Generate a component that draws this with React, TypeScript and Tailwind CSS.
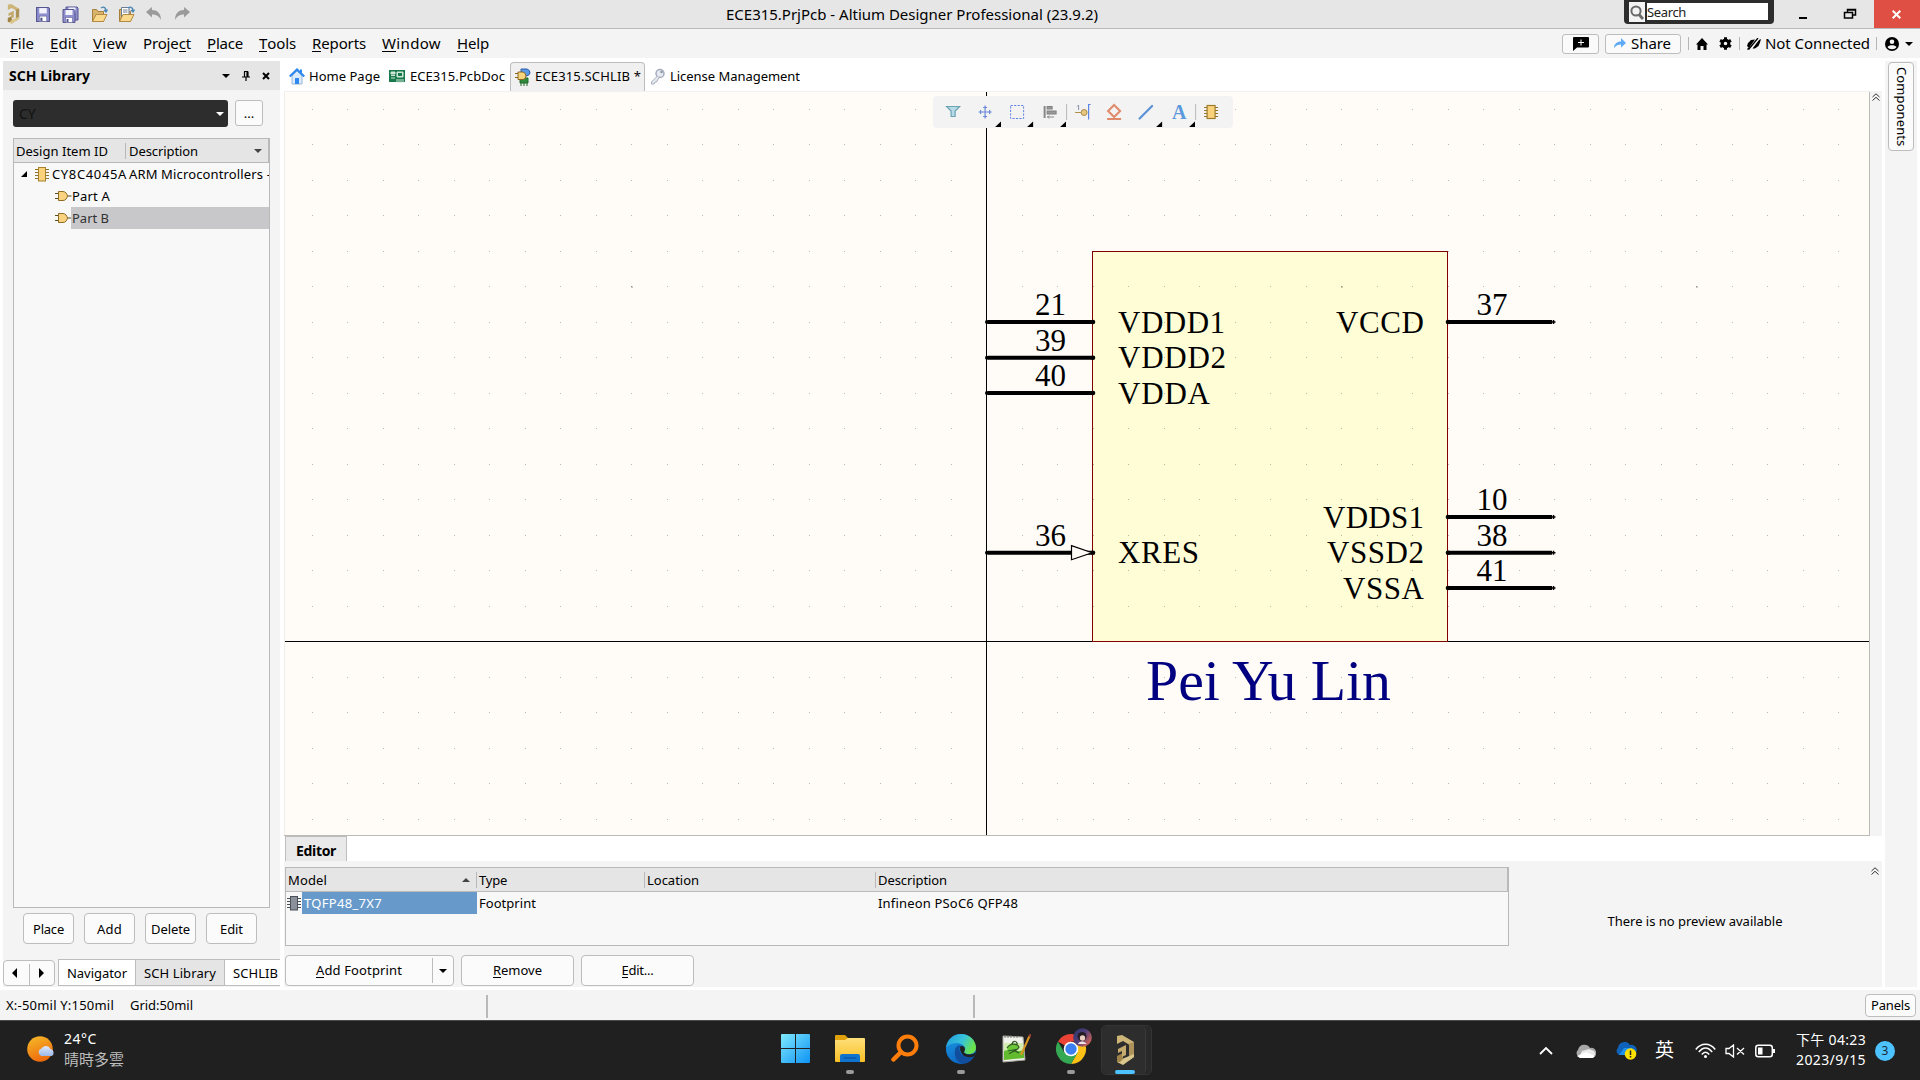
import React, { useLayoutEffect, useRef } from "react";

const UI = "font-['Noto_Sans','Noto_Sans_CJK_TC',sans-serif]";

/* Text that is tracked so that it takes exactly `w` pixels. */
function Fit({ w, className = "", children }: { w: number; className?: string; children: React.ReactNode }) {
  const ref = useRef<HTMLSpanElement>(null);
  useLayoutEffect(() => {
    const el = ref.current;
    if (!el) return;
    el.style.letterSpacing = "0px";
    const n = (el.textContent || "").length;
    const natural = el.getBoundingClientRect().width;
    el.style.letterSpacing = (w - natural) / Math.max(n, 1) + "px";
  }, [w]);
  return <span ref={ref} className={"inline-block shrink-0 whitespace-pre " + className}>{children}</span>;
}

function U({ children }: { children: React.ReactNode }) {
  return <span className="-mb-px inline-block border-b border-black leading-none">{children}</span>;
}

function Caret({ className = "", up = false, size = 8 }: { className?: string; up?: boolean; size?: number }) {
  return (
    <svg width={size} height={size / 2} viewBox="0 0 8 4" className={"shrink-0 " + className}>
      <path d={up ? "M0 4H8L4 0Z" : "M0 0H8L4 4Z"} fill="currentColor" />
    </svg>
  );
}

function AltiumLogo({ w, h }: { w: number; h: number }) {
  return (
    <svg width={w} height={h} viewBox="0 0 19 30" className="shrink-0">
      <path d="M1 1 6 0 18 7 18 12 12 9 7 6 1 9Z" fill="#cdb578" />
      <path d="M18 7V22L13 25.500V9.500L12 9Z" fill="#ad925a" />
      <path d="M18 19V22L7 30 1 27V21L6 24Z" fill="#d9c68c" />
      <path d="M1 21 7 18V24L4 27 1 27Z" fill="#a08348" />
      <path d="M2 14 10 10V20L6 22V16L2 18Z" fill="#c4aa6c" />
    </svg>
  );
}

function Save({ x = 0, y = 0 }: { x?: number; y?: number }) {
  return (
    <g transform={`translate(${x} ${y})`}>
      <path d="M.5.5H11.500L12.500 1.500V13.500H.5Z" fill="#8f8fd0" stroke="#55558f" />
      <rect x="3" y="1" width="7" height="5" fill="#f2f2fa" />
      <rect x="3" y="8.500" width="7" height="5" fill="#fff" stroke="#66669c" strokeWidth=".6" />
      <rect x="4" y="10" width="2" height="3" fill="#55558f" />
    </g>
  );
}

function OpenFolder({ doc = false }: { doc?: boolean }) {
  return (
    <svg width="17" height="17" viewBox="0 0 17 17">
      <path d="M1.500 15.500V3.500H5.500L7 5.500H12.500V15.500Z" fill="#d9b36a" stroke="#a77f3c" />
      {doc && <path d="M3.500 1.500H11V11H3.500ZM5 4H9.500M5 6H9.500" fill="#fff" stroke="#6d7d92" />}
      <path d="M1.500 15.500 5 8.500H16L12.500 15.500Z" fill="#fbd98c" stroke="#b28a43" />
      <path d="M10 2C13 0 15 2 15 5M13 4 15 6 16.500 3.500" fill="none" stroke="#4a87b5" strokeWidth="1.300" />
    </svg>
  );
}

function Undo({ flip = false }: { flip?: boolean }) {
  return (
    <svg width="16" height="14" viewBox="0 0 16 14" className={flip ? "-scale-x-100" : ""}>
      <path d="M0 5 6 0V3C11 3 15 6 15 13 13 9 10 7.500 6 7.500V10.500Z" fill="#9b9b9b" />
    </svg>
  );
}

function ChipIcon({ grey = false }: { grey?: boolean }) {
  const pin = grey ? "#4b4f58" : "#8f7430";
  return (
    <svg width="14" height="15" viewBox="0 0 14 15" className="shrink-0">
      <path d="M0 2.500H14M0 5.500H14M0 8.500H14M0 11.500H14" stroke={pin} />
      <rect x="3.500" y=".5" width="7" height="13.500" fill={grey ? "#8b919b" : "#fad27c"} stroke={grey ? "#4b4f58" : "#a8812c"} />
    </svg>
  );
}

function GateIcon() {
  return (
    <svg width="17" height="11" viewBox="0 0 17 11" className="shrink-0">
      <path d="M0 2.500H4M0 7.500H4M12 5H16.500" stroke="#5d4a1f" />
      <path d="M3.500.5H8C10.500.5 12 3 12.500 5 12 7.500 10.500 9.500 8 9.500H3.500Z" fill="#f9d37f" stroke="#8f6d25" />
    </svg>
  );
}

function TitleBar() {
  return (
    <header className="relative flex h-[29px] shrink-0 border-b border-[#b9b9b9] bg-[#e6e6e6]">
      <div className="flex items-center pl-[7px]">
        <AltiumLogo w={13} h={20} />
        <svg width="14" height="15" viewBox="0 0 13 14" className="ml-4"><Save /></svg>
        <svg width="17" height="17" viewBox="0 0 17 17" className="mx-3"><Save x={3.5} y={.5} /><Save x={.5} y={3} /></svg>
        <OpenFolder />
        <span className="w-[10px]" />
        <OpenFolder doc />
        <span className="w-[11px]" />
        <Undo />
        <span className="w-3" />
        <Undo flip />
      </div>
      <div className="absolute left-[726px] top-[3px] text-[15px] leading-[22px]">
        <Fit w={372}>ECE315.PrjPcb - Altium Designer Professional (23.9.2)</Fit>
      </div>
      <div className="ml-auto flex">
        <div className="flex h-6 w-[150px] rounded-b-[4px] bg-[#2d2d2d] pl-[5px] pt-[2px]">
          <div className="flex h-5 w-4 items-center justify-center bg-[#f4f4f4]">
            <svg width="14" height="15" viewBox="0 0 14 15" fill="none" stroke="#6b6b6b"><circle cx="6" cy="6" r="4.600" strokeWidth="2" /><path d="M9 9.500 13 14" strokeWidth="2.800" /></svg>
          </div>
          <div className="ml-[2px] mt-px flex h-[17px] w-[121px] items-center bg-white pt-px text-[13px] leading-none text-[#222]"><Fit w={39}>Search</Fit></div>
        </div>
        <svg width="100" height="28" viewBox="0 0 100 28" fill="none" stroke="#000">
          <path d="M25 18H33" strokeWidth="2" />
          <path d="M73.500 12V9.500H81.500V15H79M73.500 10H81.500" strokeWidth="1.500" />
          <rect x="70.500" y="12.500" width="8" height="5.500" strokeWidth="1.500" />
        </svg>
        <div className="flex h-7 w-[46px] items-center justify-center bg-[#e04f44]">
          <svg width="9" height="9" viewBox="0 0 9 9" className="-ml-px"><path d="M.7.7 8.300 8.300M8.300.7.700 8.300" stroke="#fff" strokeWidth="2" /></svg>
        </div>
      </div>
    </header>
  );
}

function MenuItem({ w, slot, children }: { w: number; slot: string; children: React.ReactNode }) {
  return <div className={"shrink-0 " + slot}><Fit w={w}>{children}</Fit></div>;
}

function MenuBar() {
  return (
    <nav className="flex h-[29px] shrink-0 items-center bg-[#f4f4f4] pl-[10px] text-[15px] leading-none">
      <MenuItem w={24} slot="w-10"><U>F</U>ile</MenuItem>
      <MenuItem w={27} slot="w-[43px]"><U>E</U>dit</MenuItem>
      <MenuItem w={34} slot="w-[50px]"><U>V</U>iew</MenuItem>
      <MenuItem w={48} slot="w-16">Proje<U>c</U>t</MenuItem>
      <MenuItem w={36} slot="w-[52px]"><U>P</U>lace</MenuItem>
      <MenuItem w={37} slot="w-[53px]"><U>T</U>ools</MenuItem>
      <MenuItem w={54} slot="w-[70px]"><U>R</U>eports</MenuItem>
      <MenuItem w={59} slot="w-[75px]"><U>W</U>indow</MenuItem>
      <MenuItem w={32} slot="w-10"><U>H</U>elp</MenuItem>
      <div className="ml-auto flex items-center">
        <div className="flex h-5 w-[37px] items-center justify-center rounded-[3px] border border-[#bdbdbd] bg-[#fafafa]">
          <svg width="16" height="14" viewBox="0 0 16 14"><path d="M1 0H15Q16 0 16 1V9.500Q16 10.500 15 10.500H4L0 14V1Q0 0 1 0Z" /><path d="M8 2.500V8.500M5 5.500H11" stroke="#fff" /></svg>
        </div>
        <div className="ml-[6px] flex h-5 w-[76px] items-center rounded-[3px] border border-[#bdbdbd] bg-[#fafafa] pl-2">
          <svg width="12" height="11" viewBox="0 0 12 11"><path d="M0 10C0 6 3 3.500 7 3.500V0L12 5 7 9.500V6.500C4 6.500 2 7.500 0 10Z" fill="#5eaaf5" /></svg>
          <Fit w={40} className="ml-[5px]">Share</Fit>
        </div>
        <span className="ml-[7px] h-[13px] w-px bg-[#b5b5b5]" />
        <svg width="12" height="12" viewBox="0 0 12 12" className="ml-[7px]"><path d="M6 0 12 6.500H10.500V12H7.500V8H4.500V12H1.500V6.500H0Z" /></svg>
        <svg width="13" height="13" viewBox="-6.500 -6.500 13 13" className="ml-[11px]">
          <circle r="3.300" fill="none" stroke="#000" strokeWidth="3" />
          <path d="M0-6.200V-3M0 3V6.200M-5.400-3.100-3-1.700M3 1.700 5.400 3.100M-5.400 3.100-3 1.700M3-1.700 5.400-3.100" stroke="#000" strokeWidth="3" />
        </svg>
        <span className="ml-[7px] h-[13px] w-px bg-[#b5b5b5]" />
        <svg width="14" height="12" viewBox="0 0 14 12" className="ml-[7px]"><path d="M0 8 1 5 4 2 8 1.500 2 10ZM5.500 10.500 12 2 14 1 13 4.500 11.500 8 8 10.500ZM0 11 2 9 3 10 1 12Z" /><path d="M1.500 11.500 11 0" stroke="#000" strokeWidth="1.300" /></svg>
        <Fit w={105} className="ml-[4px]">Not Connected</Fit>
        <span className="ml-[6px] h-[13px] w-px bg-[#b5b5b5]" />
        <svg width="14" height="14" viewBox="0 0 14 14" className="ml-2"><circle cx="7" cy="7" r="7" /><circle cx="7" cy="4.700" r="2.300" fill="#f4f4f4" /><path d="M2.500 10C4 7.500 10 7.500 11.500 10 10 13 4 13 2.500 10Z" fill="#f4f4f4" /></svg>
        <Caret className="ml-[6px] mr-[7px]" />
      </div>
    </nav>
  );
}

function PanelButton({ children, w }: { children: React.ReactNode; w: number }) {
  return <div className="flex h-[31px] w-[51px] items-center justify-center rounded-[4px] border border-[#bdbdbd] bg-[#fbfbfb] pt-px"><Fit w={w}>{children}</Fit></div>;
}

function LibraryPanel() {
  return (
    <aside className="flex w-[277px] shrink-0 flex-col overflow-hidden bg-[#f4f4f4] text-[13px] leading-none">
      <div className="flex h-[29px] shrink-0 items-center bg-[#e5e5e5] pl-[6px]">
        <Fit w={81} className="text-[14px] font-bold">SCH Library</Fit>
        <Caret className="ml-[132px]" />
        <svg width="8" height="10" viewBox="0 0 8 10" className="ml-3"><path d="M2 .5H6M2.500.5V5.500M5 .5V5.500M6 .5V5.500M0 6H8M4 6V10" stroke="#000" strokeWidth="1.200" fill="none" /></svg>
        <svg width="8" height="8" viewBox="0 0 8 8" className="ml-3"><path d="M1 1 7 7M7 1 1 7" stroke="#000" strokeWidth="2" /></svg>
      </div>
      <div className="mt-[10px] flex shrink-0 pl-[10px]">
        <div className="flex h-[27px] w-[215px] items-center rounded-[3px] bg-[#2d2d2d] pl-[6px]"><span className="text-[14px] text-[#111]">CY</span><Caret className="ml-auto mr-[4px] text-white" /></div>
        <div className="ml-[7px] flex h-[26px] w-7 items-center justify-center rounded-[3px] border border-[#bdbdbd] bg-[#fbfbfb] pt-px">...</div>
      </div>
      <div className="ml-[10px] mt-[11px] h-[770px] w-[257px] shrink-0 overflow-hidden border border-[#b9b9b9] bg-[#f8f8f8]">
        <div className="flex h-6 items-center border-b border-r border-[#b9b9b9] bg-[#e5e5e5] pl-[2px] pt-px">
          <Fit w={92}>Design Item ID</Fit>
          <span className="ml-[17px] h-4 w-px bg-[#b9b9b9]" />
          <Fit w={69} className="ml-[3px]">Description</Fit>
          <Caret className="ml-auto mr-[6px] text-[#444]" />
        </div>
        <div className="flex h-[22px] items-center whitespace-nowrap pl-[7px]">
          <svg width="6" height="6" viewBox="0 0 6 6" className="shrink-0"><path d="M6 0V6H0Z" /></svg>
          <span className="w-[8px] shrink-0" />
          <ChipIcon />
          <Fit w={75} className="ml-[3px]">CY8C4045A</Fit>
          <Fit w={142} className="ml-[2px]">ARM Microcontrollers -</Fit>
        </div>
        <div className="flex h-[22px] items-center pl-[41px]"><GateIcon /><Fit w={38}>Part A</Fit></div>
        <div className="flex h-[22px] items-center pl-[41px]"><GateIcon /><div className="-ml-px flex h-[22px] flex-1 items-center bg-[#c8c8ca] pl-px text-[#333]"><Fit w={37}>Part B</Fit></div></div>
      </div>
      <div className="mt-[5px] flex shrink-0 gap-[10px] pl-5">
        <PanelButton w={31}>Place</PanelButton>
        <PanelButton w={25}>Add</PanelButton>
        <PanelButton w={39}>Delete</PanelButton>
        <PanelButton w={23}>Edit</PanelButton>
      </div>
      <div className="mt-[15px] flex h-[27px] shrink-0">
        <div className="mt-px flex h-[26px] w-[52px] shrink-0 items-center rounded-[4px] border border-[#bdbdbd] bg-[#fbfbfb]">
          <svg width="50" height="24" viewBox="0 0 50 24"><path d="M13 7V17L8 12ZM35 7V17L40 12Z" /><path d="M25.500 3V24" stroke="#bdbdbd" /></svg>
        </div>
        <div className="ml-[3px] flex w-[78px] shrink-0 items-center justify-center border border-[#bdbdbd] bg-white pt-px"><Fit w={60}>Navigator</Fit></div>
        <div className="flex w-[89px] shrink-0 items-center justify-center border-b border-r border-t border-[#bdbdbd] bg-[#e5e5e5] pt-px"><Fit w={72}>SCH Library</Fit></div>
        <div className="flex w-[60px] shrink-0 items-center border-b border-t border-[#bdbdbd] bg-white pl-2 pt-px"><Fit w={45}>SCHLIB</Fit></div>
      </div>
    </aside>
  );
}

function DocumentTabs() {
  return (
    <div className="flex h-[31px] shrink-0 items-center border-b border-[#f1f1f1] text-[13px] leading-none">
      <svg width="16" height="17" viewBox="0 0 16 17" className="ml-[5px]"><path d="M3 8V16H13V8L8 3Z" fill="#d9ebfc" stroke="#9cb6d2" /><path d="M.7 8.500 8 1.500 15.300 8.500" fill="none" stroke="#2f87f0" strokeWidth="2.200" /><path d="M11 1.500H13V5L11 4Z" fill="#2f87f0" /><rect x="6" y="10" width="4" height="6" fill="#2f87f0" /></svg>
      <Fit w={71} className="ml-[4px]">Home Page</Fit>
      <svg width="16" height="13" viewBox="0 0 16 13" className="ml-[9px]"><rect width="16" height="12" fill="#187a4c" /><path d="M2 2H6V4H2ZM2 5.500H6M2 8H6M8 2H14V7H8ZM8 9V13M10 9V13M12 9V13M14 9V13" fill="#cfe7d9" stroke="#cfe7d9" /><rect x="9" y="3" width="4" height="3" fill="#187a4c" /></svg>
      <Fit w={95} className="ml-[5px]">ECE315.PcbDoc</Fit>
      <div className="ml-[5px] flex h-[29px] w-[135px] items-center rounded-t-[4px] border border-b-0 border-[#bdbdbd] bg-[#f0f0f0] pl-[4px]">
        <svg width="16" height="18" viewBox="0 0 16 18" className="shrink-0"><path d="M6 1H12Q15 2 15 5 14 8 11 8H6Z" fill="#5b98e8" stroke="#2d5da8" /><path d="M5 10H13V15H5ZM6 15V18M9 15V18M12 15V18" fill="#2f8a3c" stroke="#1f6a2a" /><path d="M3 4H8Q11 5 11 8 11 11 8 11.500H3ZM0 5.500H3M0 9.500H3" fill="#f7d47d" stroke="#8a6820" /></svg>
        <Fit w={106} className="ml-[4px]">ECE315.SCHLIB *</Fit>
      </div>
      <svg width="15" height="17" viewBox="0 0 15 17" className="ml-[5px]"><circle cx="10" cy="5.500" r="4" fill="#e7eaf0" stroke="#a3abbb" strokeWidth="1.500" /><path d="M7.500 8 1.500 14V16H4L5 14H6.500L9 9.500" fill="#e7eaf0" stroke="#a3abbb" /><circle cx="11.500" cy="4" r="1.200" fill="#8991a4" /></svg>
      <Fit w={130} className="ml-[5px]">License Management</Fit>
    </div>
  );
}

function Tool({ children, more = false, sep = false }: { children: React.ReactNode; more?: boolean; sep?: boolean }) {
  return (
    <svg viewBox="0 0 32 32" className="h-8 w-0 flex-1" fill="none">
      {children}
      {more && <path d="M32 25.500V31H26Z" fill="#000" />}
      {sep && <path d="M.5 8V24" stroke="#b9b9b9" />}
    </svg>
  );
}

function ActiveBar() {
  return (
    <div className="absolute left-[649px] top-[4px] flex h-8 w-[300px] rounded-[4px] bg-[#f3f3f3] pl-[4px] pr-[6px]">
      <Tool><path d="M9.500 10.500H22.500L18 15V20.500H14V15Z" fill="#b7dce8" stroke="#6ba2b4" strokeWidth="1.200" /></Tool>
      <Tool more><path d="M9.500 16H22.500M16 9.500V22.500M11.500 14V18M20.500 14V18M14 11.500H18M14 20.500H18" stroke="#6a88d8" strokeWidth="1.200" /></Tool>
      <Tool more><rect x="9.500" y="9.500" width="13" height="13" stroke="#6186e0" strokeDasharray="2.200 1.300" /></Tool>
      <Tool more><path d="M10.500 10V22" stroke="#888" strokeWidth="2" /><rect x="13" y="10.500" width="5" height="2.500" fill="#999" stroke="#808080" /><rect x="13" y="15" width="9" height="3" fill="#999" stroke="#808080" /><path d="M13 21H20M15 19.500 13.500 21 15 22.500" stroke="#888" /></Tool>
      <Tool sep><path d="M9 16.500H15" stroke="#b18e4a" /><circle cx="18" cy="16.500" r="3" fill="#e7c680" stroke="#aa8a4a" /><path d="M24.500 8.500H22.500V23.500" stroke="#5d86e6" strokeWidth="1.200" /><path d="M11 10.500 12.500 9V14" stroke="#8793a8" /></Tool>
      <Tool><path d="M16 9 22 15 16 21 10 15Z" stroke="#e08a6c" strokeWidth="2" /><path d="M9 23H23" stroke="#e08a6c" strokeWidth="2" /></Tool>
      <Tool more><path d="M9.500 22.500 22 10" stroke="#5b92d6" strokeWidth="2.200" strokeLinecap="round" /></Tool>
      <Tool more><text x="16" y="23" textAnchor="middle" className="font-['Liberation_Serif',serif] text-[20px] font-bold" fill="#5b98dc">A</text></Tool>
      <Tool sep><path d="M9 11.500H23M9 14.500H23M9 17.500H23M9 20.500H23" stroke="#8f7430" /><rect x="12" y="9.500" width="8" height="13" fill="#fad27c" stroke="#a07c2c" strokeWidth="1.200" /></Tool>
    </div>
  );
}

const STEP = 35.5;
const ORIGIN = { x: 702.5, y: 549.5 };

const gridPath = (() => {
  let d = "";
  for (let i = -19; i <= 32; i++)
    for (let k = -5; k <= 15; k++) {
      const x = Math.floor(ORIGIN.x + i * STEP);
      const y = Math.floor(ORIGIN.y - k * STEP);
      if (x > 2 && x < 1584 && y > 2 && y < 742) d += `M${x} ${y}h1v1h-1z`;
    }
  return d;
})();

const leftPins = [
  { y: 230, num: "21", name: "VDDD1", w: 107 },
  { y: 265.7, num: "39", name: "VDDD2", w: 108 },
  { y: 301, num: "40", name: "VDDA", w: 92 },
  { y: 460.7, num: "36", name: "XRES", w: 81 },
];
const rightPins = [
  { y: 230, num: "37", name: "VCCD", w: 88 },
  { y: 425, num: "10", name: "VDDS1", w: 101 },
  { y: 460.7, num: "38", name: "VSSD2", w: 97 },
  { y: 496, num: "41", name: "VSSA", w: 81 },
];

function Schematic() {
  return (
    <svg width="1585" height="743" viewBox="0 0 1585 743" className="block font-['Liberation_Serif',serif] text-[31px]">
      <rect x="808.500" y="159.500" width="355" height="390" fill="#fffdd5" />
      <path d={gridPath} fill="#000" fillOpacity=".27" shapeRendering="crispEdges" />
      <path d="M347 194h2v2h-2zM1057 194h2v2h-2zM1412 194h2v2h-2z" fill="#000" fillOpacity=".2" />
      <path d="M.5 0V743" stroke="#efeeea" />
      <g shapeRendering="crispEdges" fill="#000">
        <rect x="702" y="0" width="1" height="743" />
        <rect x="1" y="549" width="1584" height="1" />
      </g>
      <rect x="808.500" y="159.500" width="355" height="390" fill="none" stroke="#800000" />
      {leftPins.map((p) => (
        <g key={p.num}>
          <path d={`M704 ${p.y}H809`} stroke="#000" strokeWidth="4" />
          <circle cx="703" cy={p.y} r="2" />
          <circle cx="809" cy={p.y} r="2.300" />
          <text x="782" y={p.y - 7.2} textAnchor="end">{p.num}</text>
          <text x="834" y={p.y + 10.700} textLength={p.w}>{p.name}</text>
        </g>
      ))}
      <path d="M787.500 453.700V467.700L808 460.700Z" fill="#fffcf7" stroke="#000" strokeWidth="1.200" />
      {rightPins.map((p) => (
        <g key={p.num}>
          <path d={`M1164 ${p.y}H1268`} stroke="#000" strokeWidth="4" />
          <circle cx="1164" cy={p.y} r="2.300" />
          <path d={`M1267 ${p.y}H1271.500M1269.500 ${p.y - 2}V${p.y + 2}`} stroke="#000" strokeWidth="1.500" />
          <text x="1192.500" y={p.y - 7.2}>{p.num}</text>
          <text x="1140" y={p.y + 10.700} textAnchor="end" textLength={p.w}>{p.name}</text>
        </g>
      ))}
      <text x="862" y="608" textLength="245" lengthAdjust="spacingAndGlyphs" fill="#000080" className="text-[58px]">Pei Yu Lin</text>
    </svg>
  );
}

function DoubleChevron({ className = "" }: { className?: string }) {
  return <svg width="8" height="8" viewBox="0 0 8 8" className={className} fill="none" stroke="#333"><path d="M.5 4 4 .8 7.500 4M.5 7.500 4 4.300 7.500 7.500" /></svg>;
}

function ModelEditor() {
  return (
    <section className="flex h-[151px] shrink-0 flex-col text-[13px] leading-none">
      <div className="mr-3 flex h-[25px] shrink-0 bg-white pl-px">
        <div className="flex w-[62px] items-center justify-center border border-b-0 border-[#bdbdbd] bg-[#e9e9e9] pt-1 text-[14px] font-bold"><Fit w={40}>Editor</Fit></div>
      </div>
      <div className="flex flex-1 bg-[#f4f4f4] pl-px pt-[6px]">
        <div className="w-[1224px] shrink-0">
          <div className="h-[79px] border border-[#b9b9b9] bg-[#f8f8f8]">
            <div className="flex h-6 items-center border-b border-r border-[#b9b9b9] bg-[#e5e5e5] pt-px">
              <div className="flex w-[190px] items-center pl-[2px]"><Fit w={39}>Model</Fit><Caret up className="ml-auto mr-[6px] text-[#444]" /></div>
              <div className="flex h-4 w-[168px] items-center border-l border-[#b9b9b9] pl-[2px]"><Fit w={28}>Type</Fit></div>
              <div className="flex h-4 w-[231px] items-center border-l border-[#b9b9b9] pl-[2px]"><Fit w={52}>Location</Fit></div>
              <div className="flex h-4 items-center border-l border-[#b9b9b9] pl-[2px]"><Fit w={69}>Description</Fit></div>
            </div>
            <div className="flex h-[22px] items-center">
              <div className="ml-px"><ChipIcon grey /></div>
              <div className="ml-px flex h-[22px] w-[175px] items-center bg-[#679aca] pl-[2px] text-white"><Fit w={78}>TQFP48_7X7</Fit></div>
              <div className="w-[399px] pl-[2px]"><Fit w={57}>Footprint</Fit></div>
              <Fit w={140} className="ml-[2px]">Infineon PSoC6 QFP48</Fit>
            </div>
          </div>
          <div className="mt-[9px] flex h-[31px]">
            <div className="flex w-[169px] items-center rounded-[4px] border border-[#bdbdbd] bg-[#fbfbfb]">
              <div className="flex flex-1 justify-center"><Fit w={86}><U>A</U>dd Footprint</Fit></div>
              <span className="h-[25px] w-px bg-[#bdbdbd]" />
              <Caret className="mx-[6px]" />
            </div>
            <div className="ml-[7px] flex w-[113px] items-center justify-center rounded-[4px] border border-[#bdbdbd] bg-[#fbfbfb]"><Fit w={49}><U>R</U>emove</Fit></div>
            <div className="ml-[7px] flex w-[113px] items-center justify-center rounded-[4px] border border-[#bdbdbd] bg-[#fbfbfb]"><Fit w={32}><U>E</U>dit...</Fit></div>
          </div>
        </div>
        <div className="flex flex-1 justify-center pt-[48px]"><Fit w={175} className="ml-[10px]">There is no preview available</Fit></div>
        <DoubleChevron className="mr-[3px]" />
      </div>
    </section>
  );
}

function StatusBar() {
  return (
    <footer className="mt-[3px] flex h-[30px] shrink-0 items-center bg-[#f4f4f4] pl-[6px] text-[13px] leading-none">
      <Fit w={108}>X:-50mil Y:150mil</Fit>
      <Fit w={63} className="ml-4">Grid:50mil</Fit>
      <span className="ml-[293px] mt-[2px] h-[23px] w-[2px] bg-[#b9b9b9]" />
      <span className="ml-[485px] mt-[2px] h-[23px] w-[2px] bg-[#b9b9b9]" />
      <div className="ml-auto mr-1 flex h-[23px] w-[51px] items-center justify-center rounded-[4px] border border-[#bdbdbd] bg-[#fbfbfb] pt-px"><Fit w={39}>Panels</Fit></div>
    </footer>
  );
}

function TaskbarApp({ children, mark = "" }: { children: React.ReactNode; mark?: string }) {
  return (
    <div className="flex w-[55.200px] shrink-0 flex-col items-center">
      <div className="flex h-[49px] items-end justify-center pb-[3px]">{children}</div>
      <span className={"h-[4px] rounded-full " + mark} />
    </div>
  );
}

function Taskbar() {
  return (
    <div className="flex h-[60px] shrink-0 border-t border-[#4a4a4a] bg-[#202020] text-white">
      <div className="flex w-[767.500px] shrink-0 pl-[27px] pt-[14px]">
        <svg width="28" height="28" viewBox="0 0 28 28">
          <defs>
            <linearGradient id="sun" x1="0" y1="0" x2=".4" y2="1"><stop stopColor="#f6bd2b" /><stop offset="1" stopColor="#ee6c0c" /></linearGradient>
            <linearGradient id="mist" x1="0" y1="0" x2="0" y2="1"><stop stopColor="#dfe9fb" /><stop offset="1" stopColor="#9db9ea" /></linearGradient>
          </defs>
          <circle cx="13" cy="14" r="12.800" fill="url(#sun)" />
          <path d="M14 21A4 4 0 0 1 14.500 13.500 5 5 0 0 1 23.500 14 3.700 3.700 0 0 1 24.500 21Z" fill="url(#mist)" />
        </svg>
        <div className="ml-[9px] -mt-[6px] text-[14px] leading-[20px]">
          <div><Fit w={33}>24°C</Fit></div>
          <div className="text-[15px] text-[#bdbdbd]"><Fit w={60}>晴時多雲</Fit></div>
        </div>
      </div>
      <TaskbarApp>
        <svg width="29" height="29" viewBox="0 0 29 29" className="mb-[4px]">
          <defs><linearGradient id="win" x1="0" y1="0" x2="1" y2="1"><stop stopColor="#7fe9fd" /><stop offset="1" stopColor="#0e93f5" /></linearGradient></defs>
          <path d="M0 1Q0 0 1 0H14V14H0ZM15 0H28Q29 0 29 1V14H15ZM0 15H14V29H1Q0 29 0 28ZM15 15H29V28Q29 29 28 29H15Z" fill="url(#win)" />
        </svg>
      </TaskbarApp>
      <TaskbarApp mark="w-2 bg-[#9a9a9a]">
        <svg width="30" height="27" viewBox="0 0 30 27" className="mb-[5px]">
          <defs><linearGradient id="fold" x1="0" y1="0" x2="0" y2="1"><stop stopColor="#ffe07a" /><stop offset="1" stopColor="#f9bf25" /></linearGradient></defs>
          <path d="M0 1Q0 0 1 0H10L13 3V8H0Z" fill="#e0a10a" />
          <path d="M0 5H10L13 3H29Q30 3 30 4V26Q30 27 29 27H1Q0 27 0 26Z" fill="url(#fold)" />
          <path d="M5 27V21Q5 19 7 19H23Q25 19 25 21V27Z" fill="#0f74cf" /><path d="M9 23H21" stroke="#064a94" strokeLinecap="round" />
        </svg>
      </TaskbarApp>
      <TaskbarApp>
        <svg width="28" height="28" viewBox="0 0 28 28" className="mb-[5px]" fill="none" stroke="#ff7d0a"><circle cx="16.500" cy="11.500" r="9" strokeWidth="4" /><path d="M10 18 2.500 25.500" strokeWidth="4.500" strokeLinecap="round" /></svg>
      </TaskbarApp>
      <TaskbarApp mark="w-2 bg-[#9a9a9a]">
        <svg width="30" height="30" viewBox="0 0 30 30" className="mb-[3px]">
          <defs>
            <linearGradient id="e1" x1="0" y1="0" x2="1" y2=".4"><stop stopColor="#2098e0" /><stop offset=".6" stopColor="#38c4d8" /><stop offset="1" stopColor="#6be34e" /></linearGradient>
            <linearGradient id="e2" x1="0" y1="0" x2=".6" y2="1"><stop stopColor="#1b9be6" /><stop offset="1" stopColor="#0b62bd" /></linearGradient>
          </defs>
          <circle cx="15" cy="15" r="15" fill="url(#e2)" />
          <path d="M0 14C1 5 8 0 15 0 24 0 30 7 30 13.500 30 18 27 20 23 20 19 20 17 18.500 18.500 17 21 13 16 9 11 9 5 9 1 12 0 14Z" fill="url(#e1)" />
          <path d="M9 17C9 13 12 11 14.500 11.500 12 15 14 22 21 23 25 23.500 27 22 28 22.500 25 28 20 30 16 29.500 11 28 8 23 9 17Z" fill="#114f9e" />
          <path d="M14.500 12C18 11.500 20 14 18.500 17 17 19 20 20.500 24 20.500 27 20.500 29.500 19 30 17L28.500 22C25 24 19 23.500 16.500 20.500 14 17.500 13.500 14 14.500 12Z" fill="#202020" />
        </svg>
      </TaskbarApp>
      <TaskbarApp>
        <svg width="30" height="29" viewBox="0 0 30 29" className="mb-[4px]">
          <path d="M2 2 22 3 24 26 2 28Z" fill="#f1f1ec" stroke="#a9a9a0" />
          <path d="M3 9 22 9 23 24 3 26Z" fill="#d3edae" /><path d="M3 17C9 14 16 19 23 16V24L3 26Z" fill="#62bb2e" />
          <path d="M6 14C9 9 16 9 18 13 16 18 10 17 8 20Z" fill="#6cc63a" />
          <path d="M6 14C9 9 16 9 18 13 16 18 10 17 8 20M11 10C12 6 17 7 16 11M12 16 18 19M7 17 17 15" fill="none" stroke="#2f5a22" strokeWidth="1.200" />
          <path d="M4 1.500V4M7 1.500V4M10 1.500V4M13 2V4M16 2V4" stroke="#777" />
          <path d="M28.500 2 20 21" stroke="#d99520" strokeWidth="2" /><path d="M29.500 0 28.500 3" stroke="#a33a36" strokeWidth="2" />
        </svg>
      </TaskbarApp>
      <TaskbarApp mark="w-2 bg-[#9a9a9a]">
        <svg width="36" height="36" viewBox="0 0 36 36" className="mb-[3px] ml-[6px]">
          <defs><linearGradient id="av" x1="0" y1="0" x2="1" y2=".8"><stop stopColor="#28356e" /><stop offset=".5" stopColor="#503f7a" /><stop offset="1" stopColor="#e36a52" /></linearGradient></defs>
          <path d="M15 21 2 13.500A15 15 0 0 1 28 13.500H15Z" fill="#ea4335" />
          <path d="M15 21 28 13.500A15 15 0 0 1 15 36L21.500 24.500Z" fill="#fbc116" />
          <path d="M15 21 21.500 24.800 15 36A15 15 0 0 1 2 13.500L8.500 24.800Z" fill="#34a853" />
          <circle cx="15" cy="21" r="7.300" fill="#fff" /><circle cx="15" cy="21" r="5.700" fill="#3c7ff0" />
          <circle cx="26.500" cy="9.500" r="9.300" fill="url(#av)" />
          <circle cx="26" cy="8.500" r="4.500" fill="#241c24" /><circle cx="26.500" cy="10" r="2.700" fill="#ecd0c3" /><path d="M22 16C23 12.500 29 12.500 30.500 16Z" fill="#eee4e4" />
        </svg>
      </TaskbarApp>
      <div className="ml-[2px] mt-[4px] flex h-[50px] w-[51px] shrink-0 rounded-[5px] border border-[#343434] bg-[#292929]">
        <div className="flex h-[48px] w-[44px] flex-col items-center rounded-[5px] border-r border-[#3a3a3a] bg-[#2d2d2d] pl-[4px] pt-[9px]">
          <AltiumLogo w={19} h={30} />
          <span className="mt-[5px] h-[4px] w-5 shrink-0 rounded-full bg-[#4cc2ff]" />
        </div>
      </div>
      <div className="ml-auto flex items-center pr-[25px]">
        <svg width="14" height="8" viewBox="0 0 14 8" fill="none" stroke="#fff" strokeWidth="1.800"><path d="M1 7 7 1 13 7" /></svg>
        <svg width="20" height="14" viewBox="0 0 20 14" className="ml-[23px]"><path d="M4 13A4 4 0 0 1 2 6 6.500 6.500 0 0 1 14 4 5 5 0 0 1 18 13Z" fill="#a8a8a8" /><path d="M3 13.500 6 7 13 5 18 7A4 4 0 0 1 16 13.500Z" fill="#e8e8e8" /><path d="M1 12 10 8 19 12 17 14H4Z" fill="#fff" /></svg>
        <svg width="21" height="18" viewBox="0 0 21 18" className="ml-5"><path d="M4 13A4 4 0 0 1 2 6 6.500 6.500 0 0 1 14 3 5 5 0 0 1 17 13Z" fill="#0f62ba" /><path d="M3 13 8 6 16 6 17 13Z" fill="#2090ea" /><circle cx="14.500" cy="12" r="5.800" fill="#fce100" /><path d="M14.500 8.500V13M14.500 14V15.500" stroke="#222" strokeWidth="1.500" /></svg>
        <span className="ml-[18px] w-5 text-[19px] leading-none">英</span>
        <svg width="21" height="16" viewBox="0 0 21 16" className="ml-5" fill="none" stroke="#fff" strokeWidth="1.500"><path d="M.8 6.500C6-.5 15-.5 20.200 6.500M3.800 9C8 3.500 13 3.500 17.200 9M6.800 11.500C9 8.500 12 8.500 14.200 11.500" /><circle cx="10.500" cy="13.500" r="1.500" fill="#fff" stroke="none" /></svg>
        <svg width="20" height="14" viewBox="0 0 20 14" className="ml-[9px]" fill="none" stroke="#fff" strokeWidth="1.300"><path d="M1 4.500H4L8.500 1V13L4 9.500H1ZM12 4 19 10.500M19 4 12 10.500" /></svg>
        <svg width="20" height="14" viewBox="0 0 20 14" className="ml-[10px]" fill="none" stroke="#fff" strokeWidth="1.500"><rect x=".8" y="1.200" width="16.500" height="11.500" rx="2.500" /><path d="M19 5V9" strokeWidth="2" /><rect x="3" y="3.500" width="4.500" height="7" fill="#fff" stroke="none" /></svg>
        <div className="-mt-[2px] ml-[21px] text-right text-[14px] leading-[20px]">
          <div><Fit w={70}>下午 04:23</Fit></div>
          <div><Fit w={70}>2023/9/15</Fit></div>
        </div>
        <div className="ml-[9px] flex h-5 w-5 items-center justify-center rounded-full bg-[#4cc2ff] text-[12px] leading-none text-[#1b2a35]">3</div>
      </div>
    </div>
  );
}

export default function App() {
  return (
    <div className={"flex h-[1080px] w-[1920px] flex-col overflow-hidden bg-white text-black " + UI}>
      <TitleBar />
      <MenuBar />
      <div className="mt-[3px] flex h-[926px] shrink-0 pl-[3px]">
        <LibraryPanel />
        <main className="ml-1 flex w-[1598px] shrink-0 flex-col">
          <DocumentTabs />
          <div className="flex h-[744px] shrink-0">
            <div className="relative w-[1586px] shrink-0 border-b border-r border-[#bdbbb5] bg-[#fffcf7]">
              <Schematic />
              <ActiveBar />
            </div>
            <div className="flex-1 bg-[#f4f4f4] pl-[2px]"><DoubleChevron className="mt-px" /></div>
          </div>
          <ModelEditor />
        </main>
        <div className="ml-[3px] w-8 shrink-0 bg-[#f4f4f4] pl-[3px] pt-px">
          <div className="flex h-[89px] w-[26px] items-center justify-center rounded-[4px] border border-[#bdbdbd] bg-[#fbfbfb] text-[13px] leading-none [writing-mode:vertical-rl]"><span className="tracking-[0.1px]">Components</span></div>
        </div>
      </div>
      <StatusBar />
      <Taskbar />
    </div>
  );
}
